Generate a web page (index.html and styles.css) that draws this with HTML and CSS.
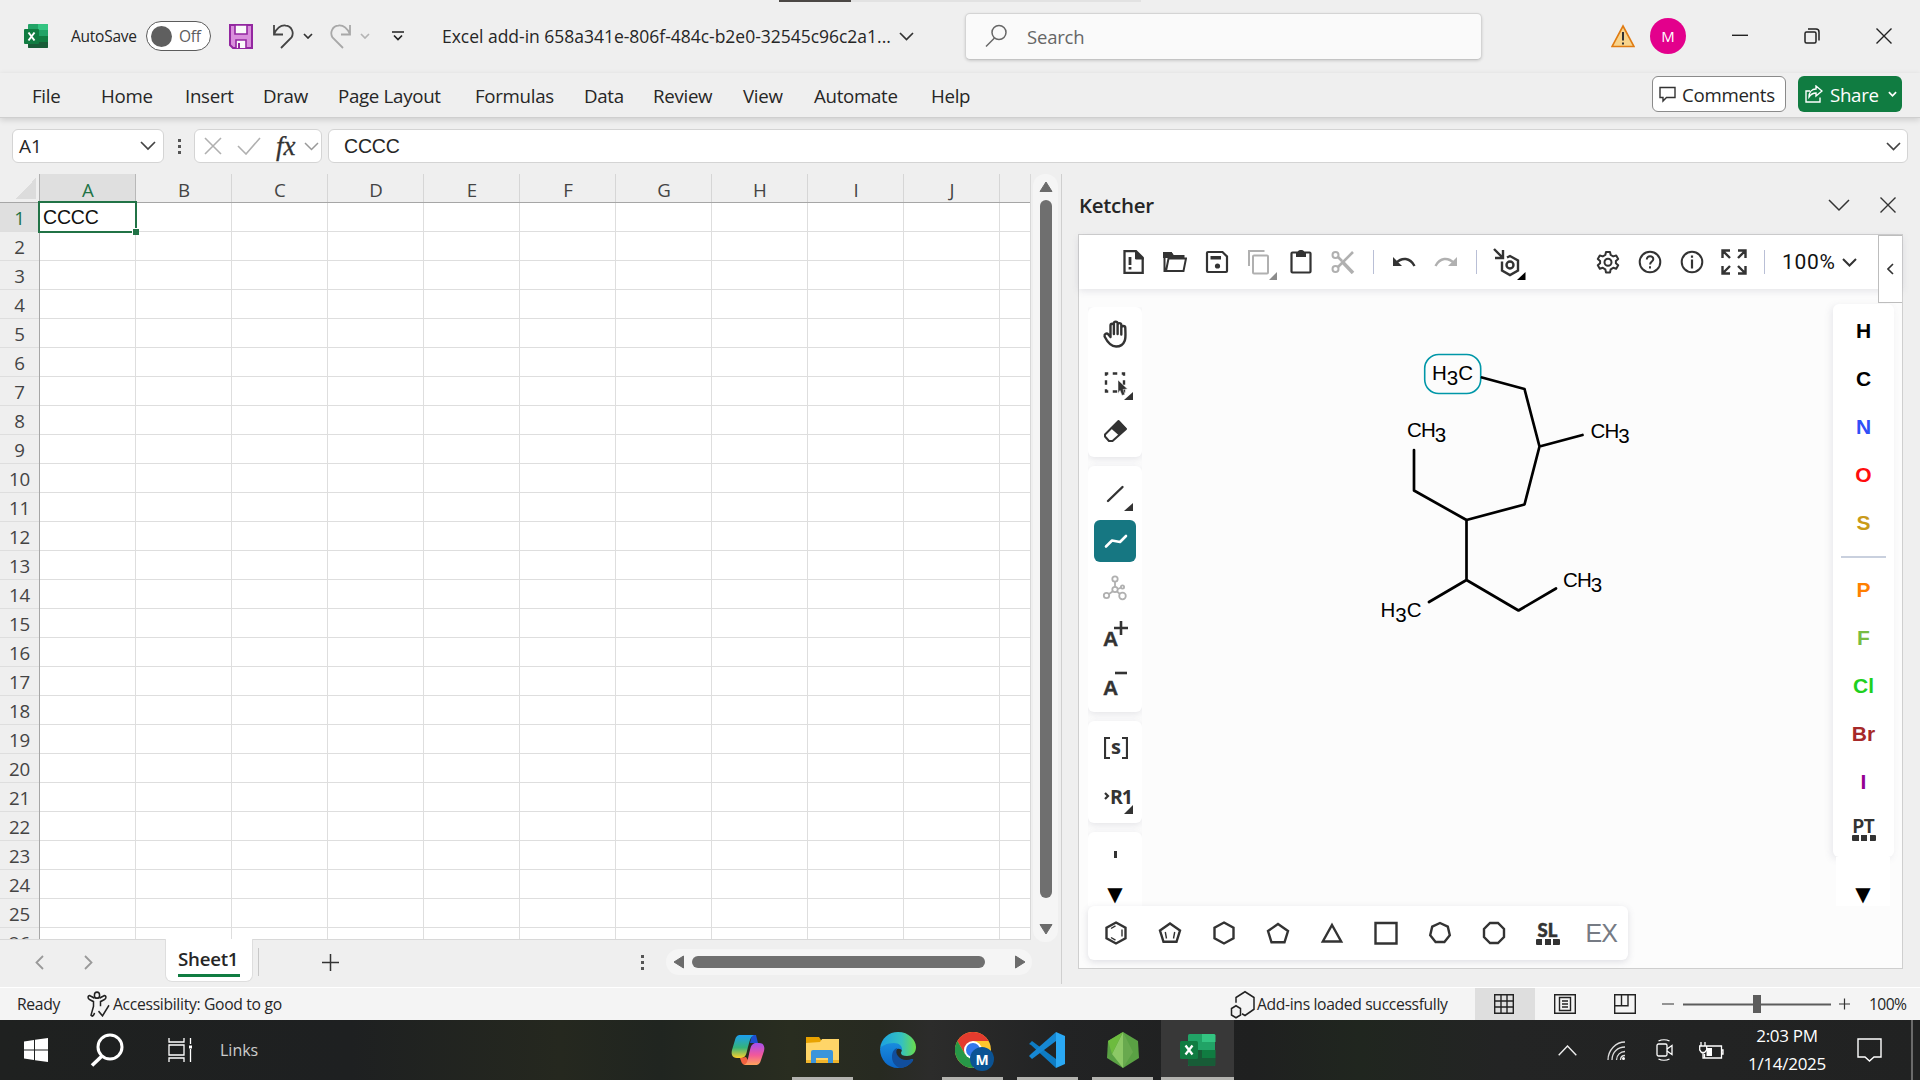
FILE: index.html
```html
<!DOCTYPE html>
<html lang="en">
<head>
<meta charset="utf-8">
<title>Excel - Ketcher add-in</title>
<link rel="stylesheet" href="styles.css">
</head>
<body>
<div class="app">

<header class="titlebar">
  <div class="progress"><i></i></div>
  <svg class="excel-logo" width="24" height="24" viewBox="0 0 24 24"><rect x="4" width="20" height="24" rx="1" fill="#21a366"/><path d="M14 0h9a1 1 0 0 1 1 1v5H14z" fill="#33c481"/><path d="M14 6h10v6H14z" fill="#21a366"/><path d="M4 12h10v6H4z" fill="#185c37"/><path d="M14 12h10v6H14z" fill="#107c41"/><path d="M4 18h20v5a1 1 0 0 1-1 1H5a1 1 0 0 1-1-1z" fill="#185c37"/><rect y="5" width="15" height="15" rx="1" fill="#107c41"/><path d="M4.500 8.500l6 8M10.500 8.500l-6 8" stroke="#fff" stroke-width="2"/></svg>
  <span class="autosave">AutoSave</span>
  <span class="toggle"><i></i>Off</span>
  <svg class="save" width="24" height="25" viewBox="0 0 24 25"><path d="M1 1h22v23H4l-3-3z" fill="#d98fdc" stroke="#9327a0" stroke-width="2"/><path d="M6 1h12v9H6zM7 24v-8h10v8" fill="#fafafa" stroke="#9327a0" stroke-width="1.600"/><path d="M10 19v5" stroke="#9327a0" stroke-width="2"/></svg>
  <svg class="undo" width="23" height="25" viewBox="0 0 23 25" fill="none" stroke="#444" stroke-width="1.800"><path d="M2 1v9.500h9M2 10C5 4 9 1 13.500 1.500c6 .5 9 7 6 12L9 24"/></svg>
  <svg class="chev-a" width="10" height="6" viewBox="0 0 10 6" fill="none" stroke="#333" stroke-width="1.700"><path d="M1 1l4 4 4-4"/></svg>
  <svg class="redo" width="23" height="25" viewBox="0 0 23 25" fill="none" stroke="#a8a8a8" stroke-width="1.800"><path d="M21 1v9.500h-9M21 10C18 4 14 1 9.500 1.500c-6 .5-9 7-6 12L14 24"/></svg>
  <svg class="chev-b" width="10" height="6" viewBox="0 0 10 6" fill="none" stroke="#b4b4b4" stroke-width="1.700"><path d="M1 1l4 4 4-4"/></svg>
  <svg class="qat" width="12" height="10" viewBox="0 0 12 10" fill="none" stroke="#222" stroke-width="1.700"><path d="M0 1h12M2 4.500l4 4 4-4"/></svg>
  <span class="doc-name">Excel add-in 658a341e-806f-484c-b2e0-32545c96c2a1...</span>
  <svg class="chev-c" width="15" height="9" viewBox="0 0 15 9" fill="none" stroke="#333" stroke-width="1.700"><path d="M1 1l6.500 6.500L14 1"/></svg>
  <div class="search"><svg width="22" height="24" viewBox="0 0 22 24" fill="none" stroke="#666" stroke-width="1.500"><circle cx="14" cy="8.500" r="7"/><path d="M9.500 14L1 22.500"/></svg><span>Search</span></div>
  <svg class="warn" width="24" height="24" viewBox="0 0 24 24"><path d="M12 2L23 22.500H1z" fill="#f8d48c" stroke="#e07b12" stroke-width="1.600"/><path d="M12 8v8.500M12 18.500v2" stroke="#333" stroke-width="2"/></svg>
  <span class="avatar">M</span>
  <svg class="w-min" width="16" height="16" viewBox="0 0 16 16" stroke="#222" stroke-width="1.400"><path d="M0 7.300h16"/></svg>
  <svg class="w-max" width="16" height="16" viewBox="0 0 16 16" fill="none" stroke="#222" stroke-width="1.500"><rect x="1" y="4" width="11" height="11" rx="1.500"/><path d="M4 1h8a3 3 0 0 1 3 3v8.500"/></svg>
  <svg class="w-close" width="16" height="16" viewBox="0 0 16 16" stroke="#222" stroke-width="1.400"><path d="M.5.5l15 15M15.500.5l-15 15"/></svg>
</header>

<nav class="ribbon">
  <div class="tabs"><span>File</span><span>Home</span><span>Insert</span><span>Draw</span><span>Page Layout</span><span>Formulas</span><span>Data</span><span>Review</span><span>View</span><span>Automate</span><span>Help</span></div>
  <div class="btn comments"><svg width="17" height="17" viewBox="0 0 17 17" fill="none" stroke="#333" stroke-width="1.400"><path d="M1 1.500h15v10H7.500L4 15v-3.500H1z"/></svg><span>Comments</span></div>
  <div class="btn share"><svg width="18" height="18" viewBox="0 0 18 18" fill="none" stroke="#fff" stroke-width="1.400"><path d="M5 6H1v11h14v-4.500M11 1l6 5-6 5V8C8 8 6 9 4 12c0-5 3-8 7-8z"/></svg><span>Share</span><svg width="9" height="6" viewBox="0 0 10 6" fill="none" stroke="#fff" stroke-width="1.900"><path d="M1 1l4 4 4-4"/></svg></div>
</nav>

<section class="formula-bar">
  <div class="field name-box"><span>A1</span><svg width="16" height="10" viewBox="0 0 16 10" fill="none" stroke="#444" stroke-width="1.700"><path d="M1 1l7 7 7-7"/></svg></div>
  <div class="dots"><i></i><i></i><i></i></div>
  <div class="field fx">
    <svg width="18" height="18" viewBox="0 0 18 18" stroke="#b0b0b0" stroke-width="1.600"><path d="M1 1l16 16M17 1L1 17"/></svg>
    <svg width="24" height="18" viewBox="0 0 24 18" fill="none" stroke="#b0b0b0" stroke-width="1.600"><path d="M1 9l8 8L23 1"/></svg>
    <em>fx</em>
    <svg width="15" height="9" viewBox="0 0 15 9" fill="none" stroke="#999" stroke-width="1.500"><path d="M1 1l6.500 6.500L14 1"/></svg>
  </div>
  <div class="field formula"><span>CCCC</span><svg width="15" height="9" viewBox="0 0 15 9" fill="none" stroke="#444" stroke-width="1.700"><path d="M1 1l6.500 6.500L14 1"/></svg></div>
</section>

<main class="main">
  <section class="workbook">
    <div class="grid-area">
      <div class="sheet">
        <div class="col-heads"><span class="corner"></span><span class="on">A</span><span>B</span><span>C</span><span>D</span><span>E</span><span>F</span><span>G</span><span>H</span><span>I</span><span>J</span><span class="rest"></span></div>
        <div class="sheet-body">
          <div class="row-heads"><span class="on">1</span><span>2</span><span>3</span><span>4</span><span>5</span><span>6</span><span>7</span><span>8</span><span>9</span><span>10</span><span>11</span><span>12</span><span>13</span><span>14</span><span>15</span><span>16</span><span>17</span><span>18</span><span>19</span><span>20</span><span>21</span><span>22</span><span>23</span><span>24</span><span>25</span><span>26</span></div>
          <div class="cells"><div class="active-cell">CCCC<i></i></div></div>
        </div>
      </div>
      <div class="vscroll">
        <svg width="14" height="12" viewBox="0 0 14 12"><path d="M7 1l6 9.500H1z" fill="#6b6b6b" stroke="#6b6b6b" stroke-linejoin="round"/></svg>
        <i></i>
        <svg width="14" height="12" viewBox="0 0 14 12"><path d="M7 11l6-9.500H1z" fill="#6b6b6b" stroke="#6b6b6b" stroke-linejoin="round"/></svg>
      </div>
    </div>
    <div class="sheet-tabs">
      <svg class="prev" width="9" height="15" viewBox="0 0 9 15" fill="none" stroke="#999" stroke-width="1.800"><path d="M8 1L1.500 7.500 8 14"/></svg>
      <svg class="next" width="9" height="15" viewBox="0 0 9 15" fill="none" stroke="#999" stroke-width="1.800"><path d="M1 1l6.500 6.500L1 14"/></svg>
      <div class="tab"><span>Sheet1</span></div>
      <i class="tab-sep"></i>
      <svg class="add" width="17" height="17" viewBox="0 0 17 17" stroke="#333" stroke-width="1.500"><path d="M8.500 0v17M0 8.500h17"/></svg>
      <div class="dots tab-dots"><i></i><i></i><i></i></div>
      <div class="hscroll">
        <svg width="12" height="14" viewBox="0 0 12 14"><path d="M1 7l9.500-6v12z" fill="#6b6b6b" stroke="#6b6b6b" stroke-linejoin="round"/></svg>
        <i></i>
        <svg width="12" height="14" viewBox="0 0 12 14"><path d="M11 7L1.500 1v12z" fill="#6b6b6b" stroke="#6b6b6b" stroke-linejoin="round"/></svg>
      </div>
    </div>
  </section>

  <aside class="pane">
    <div class="pane-head"><h2>Ketcher</h2>
      <svg width="22" height="13" viewBox="0 0 22 13" fill="none" stroke="#333" stroke-width="1.500"><path d="M1 1l10 10L21 1"/></svg>
      <svg width="16" height="16" viewBox="0 0 16 16" stroke="#333" stroke-width="1.400"><path d="M.5.5l15 15M15.500.5l-15 15"/></svg>
    </div>
    <div class="ketcher">
      <div class="k-toolbar">
        <svg class="ic" viewBox="0 0 24 24"><path d="M3.500 1.200H15l6.700 6.500V23H3.500z" fill="none" stroke="#333" stroke-width="2.300"/><path d="M14.500 1v8h8z" fill="#333" stroke="#333"/><path d="M9 7v8M9 17v2.600" stroke="#333" stroke-width="2.800"/></svg>
        <svg class="ic" viewBox="0 0 24 24" fill="none" stroke="#333" stroke-width="2"><path d="M4 21H1.500V3H8l2 3h10.500v3M5.500 8.500H23L20.500 21H3z"/><path d="M1 3h7l2 3h10v1H1z" fill="#333"/></svg>
        <svg class="ic" viewBox="0 0 24 24"><path d="M3 2h14.500L22 6.500V21a1 1 0 0 1-1 1H3a1 1 0 0 1-1-1V3a1 1 0 0 1 1-1z" fill="none" stroke="#333" stroke-width="2.200"/><path d="M5.500 6H16v3.500H5.500z" fill="#333"/><circle cx="12.500" cy="16" r="2.600" fill="#333"/></svg>
        <svg class="ic wide" viewBox="0 0 34 30" fill="none" stroke="#b0b0b0" stroke-width="2"><path d="M6 16V1h15.500"/><rect x="10" y="5.500" width="15" height="18" rx="1"/><path d="M34 22v8h-8z" fill="#8b8b8b" stroke="none"/></svg>
        <svg class="ic" viewBox="0 0 24 24" fill="none" stroke="#333" stroke-width="2.200"><rect x="2.500" y="2.500" width="19" height="20" rx="1"/><path d="M7 3V7h10V3h-2.500a2.500 2.500 0 0 0-5 0z" fill="#333" stroke="none"/><path d="M9.500 3a2.500 2 0 0 1 5 0"/></svg>
        <svg class="ic" viewBox="0 0 24 24" fill="none" stroke="#b0b0b0" stroke-width="2"><circle cx="4.500" cy="5" r="3"/><circle cx="4.500" cy="19" r="3"/><path d="M7 7l4 4M7 17L22 2" stroke-width="2.600"/><path d="M12 12.500L22 23" stroke-width="3.500"/></svg>
        <i class="sep"></i>
        <svg class="ic" viewBox="0 0 24 24"><path d="M1 7v9h9z" fill="#333"/><path d="M4 13C10 7 18 7.500 22.500 16" fill="none" stroke="#333" stroke-width="2.400"/></svg>
        <svg class="ic" viewBox="0 0 24 24"><path d="M23 7v9h-9z" fill="#b0b0b0"/><path d="M20 13C14 7 6 7.500 1.500 16" fill="none" stroke="#b0b0b0" stroke-width="2.400"/></svg>
        <i class="sep"></i>
        <svg class="ic calc" viewBox="0 0 34 32" fill="none" stroke="#333" stroke-width="2.400"><path d="M1 1l8.500 8.500M10 2v8H2"/><path d="M9 13.500v9l8 4.500 8-4.500v-10L17 8l-3 1.500"/><circle cx="17" cy="17" r="3.500"/><path d="M32.500 24v8H24z" fill="#000" stroke="none"/></svg>
        <svg class="ic push" viewBox="0 0 24 24" fill="none" stroke="#333" stroke-width="2" stroke-linejoin="round"><path d="M10 2h4l.7 3 2.500 1.400 3-.9 2 3.500-2.300 2v2.300l2.300 2-2 3.500-3-1-2.500 1.500L14 22.500h-4l-.7-3.200-2.500-1.500-3 1-2-3.500 2.300-2V11L1.800 9l2-3.500 3 .9L9.300 5z"/><circle cx="12" cy="12.200" r="3.500"/></svg>
        <svg class="ic" viewBox="0 0 24 24" fill="none" stroke="#333" stroke-width="2"><circle cx="12" cy="12" r="10.300"/><path d="M8.800 9.500c0-4.500 6.700-4.200 6.500-.2-.1 2.200-3.200 2.500-3.200 5.200M12 16.300v2.200"/></svg>
        <svg class="ic" viewBox="0 0 24 24" fill="none" stroke="#333" stroke-width="2"><circle cx="12" cy="12" r="10.300"/><path d="M12 9.500v9M12 5.500v2.300" stroke-width="2.200"/></svg>
        <svg class="ic full" viewBox="0 0 26 26" fill="none" stroke="#333" stroke-width="2.400"><path d="M1.500 9V1.500H9M2 2l7 7M17 1.500h7.500V9M24 2l-7 7M1.500 17v7.500H9M2 24l7-7M24.500 17v7.500H17M24 24l-7-7"/></svg>
        <i class="sep"></i>
        <span class="zoom">100%</span>
        <svg class="zoom-chev" width="15" height="9" viewBox="0 0 15 9" fill="none" stroke="#333" stroke-width="2"><path d="M1 1l6.500 6.500L14 1"/></svg>
        <div class="panel-toggle"><svg width="7" height="12" viewBox="0 0 7 12" fill="none" stroke="#333" stroke-width="1.600"><path d="M6 1L1 6l5 5"/></svg></div>
      </div>

      <div class="k-body">
        <div class="k-work">
          <div class="k-left">
            <div class="group g1">
              <svg class="tool" viewBox="0 0 42 42" fill="none" stroke="#333" stroke-width="2.400" stroke-linecap="round" stroke-linejoin="round"><path d="M16.500 24V12.500a1.700 1.700 0 0 1 3.400 0V21v-10.500a1.800 1.800 0 0 1 3.700 0V21v-9a1.800 1.800 0 0 1 3.700 0v9.500-6.500a1.900 1.900 0 0 1 4 0c0 4 .8 9.500-.7 13-1.500 4-4.500 5.500-8.500 5.500-6 0-9.500-6-11.500-10-.5-2.500 2-4 3.800-2z"/></svg>
              <svg class="tool" viewBox="0 0 42 42"><path d="M12 11.500h18v18H12z" fill="none" stroke="#333" stroke-width="2.400" stroke-dasharray="4.500 4.500" stroke-dashoffset="2.250"/><path d="M24 18l9.500 9-4.500.5 2 5-3 1-2-5-2 3z" fill="#333" stroke="#fff" stroke-width=".5"/><path d="M39 30v8h-9z" fill="#333"/></svg>
              <svg class="tool" viewBox="0 0 42 42"><path d="M24.500 10l7.500 8-13.500 12h-3.500L11 25.500v-2z" fill="none" stroke="#333" stroke-width="2" stroke-linejoin="round"/><path d="M24.500 9.500l8 8-7.500 7-8.500-7.500z" fill="#333"/></svg>
            </div>
            <div class="group g2">
              <svg class="tool" viewBox="0 0 42 42"><path d="M14 28L28.500 14" stroke="#333" stroke-width="2.400" stroke-linecap="round"/><path d="M39 30v8h-9z" fill="#333"/></svg>
              <svg class="tool active" viewBox="0 0 42 42"><path d="M12 26.500l6-6 8 1.500 6-6" fill="none" stroke="#fff" stroke-width="2.600" stroke-linecap="round" stroke-linejoin="round"/></svg>
              <svg class="tool" viewBox="0 0 42 42" fill="none" stroke="#b0b0b0" stroke-width="1.800"><circle cx="21" cy="11" r="2.700"/><circle cx="21" cy="21.500" r="2.700"/><circle cx="12.500" cy="27.500" r="2.700"/><circle cx="28.500" cy="28" r="3.300"/><circle cx="28.500" cy="19" r="1.600"/><path d="M21 14v5M18.500 23.500l-3.500 2.500M23 23.500l3 2.500M24 21l3-1.500"/></svg>
              <div class="tool letter">A<svg width="14" height="14" viewBox="0 0 14 14" stroke="#333" stroke-width="2.600"><path d="M7 0v14M0 7h14"/></svg></div>
              <div class="tool letter">A<svg width="12" height="14" viewBox="0 0 12 14" stroke="#333" stroke-width="2.600"><path d="M0 3h12"/></svg></div>
            </div>
            <div class="group g3">
              <div class="tool sgroup"><svg width="6" height="22" viewBox="0 0 6 22" fill="none" stroke="#333" stroke-width="2.200"><path d="M6 1H1v20h5"/></svg><b>s</b><svg width="6" height="22" viewBox="0 0 6 22" fill="none" stroke="#333" stroke-width="2.200"><path d="M0 1h5v20H0"/></svg></div>
              <div class="tool rgroup"><svg width="6" height="8" viewBox="0 0 6 8" fill="none" stroke="#333" stroke-width="2.200"><path d="M1 1l3 3-3 3"/></svg><b>R1</b><svg class="mark" width="9" height="9" viewBox="0 0 9 9"><path d="M9 0v9H0z" fill="#333"/></svg></div>
            </div>
            <div class="group g4"><i></i></div>
            <div class="more">▼</div>
          </div>
          <svg class="canvas" viewBox="1142 307 691 599" fill="none" stroke="#000" stroke-width="2.700" stroke-linecap="round" stroke-linejoin="round">
            <rect x="1424.700" y="354.500" width="56" height="39" rx="14" stroke="#0097a8" stroke-width="1.600"/>
            <path d="M1482 377.500l42.500 11.500 15 57.500-15 58-58 15.500-52.500-29.500v-40.500M1539.500 446.500l43-11.500M1466.500 520v60l-37.500 22M1466.500 580l52 30.500 37.500-22"/>
            <g class="atom">
              <text class="hc" x="1432" y="380">H<tspan dy="4.500">3</tspan><tspan dy="-4.500">C</tspan></text>
              <text x="1407" y="437">CH<tspan dy="4.500">3</tspan></text>
              <text x="1590.500" y="438">CH<tspan dy="4.500">3</tspan></text>
              <text x="1563" y="587">CH<tspan dy="4.500">3</tspan></text>
              <text class="hc" x="1380.500" y="617">H<tspan dy="4.500">3</tspan><tspan dy="-4.500">C</tspan></text>
            </g>
          </svg>
          <div class="k-right">
            <div class="elements">
              <b class="e-h">H</b><b class="e-c">C</b><b class="e-n">N</b><b class="e-o">O</b><b class="e-s">S</b>
              <hr>
              <b class="e-p">P</b><b class="e-f">F</b><b class="e-cl">Cl</b><b class="e-br">Br</b><b class="e-i">I</b>
              <div class="stack pt"><span>PT</span><i></i></div>
            </div>
            <div class="more-r">▼</div>
          </div>
        </div>
        <div class="k-bottom">
          <svg viewBox="0 0 24 24"><path d="M12 1.500l9.500 5.300v10.400L12 22.500l-9.500-5.300V6.800z"/><path d="M18 8.500v7M7 7.500l4.500-2.700M7 16.500l4.500 2.700" stroke-width="1.400"/></svg>
          <svg viewBox="0 0 24 24"><path d="M12 2.500L22 9.500l-3.500 11.300h-13L2 9.500z"/><path d="M8.500 17.500L7.300 11M15.500 17.500l1.200-6.500" stroke-width="1.400"/></svg>
          <svg viewBox="0 0 24 24"><path d="M12 1.500l9.500 5.300v10.400L12 22.500l-9.500-5.300V6.800z"/></svg>
          <svg viewBox="0 0 24 24"><path d="M12 3L22 10l-3.500 11.300h-13L2 10z"/></svg>
          <svg viewBox="0 0 24 24"><path d="M12 4l9.200 16.500H2.800z"/></svg>
          <svg viewBox="0 0 24 24"><path d="M1.500 2h21v20.500h-21z"/></svg>
          <svg viewBox="0 0 24 24"><path d="M12 2l7.800 3.700 2 8.500-5.400 6.800H7.600l-5.400-6.800 2-8.500z"/></svg>
          <svg viewBox="0 0 24 24"><path d="M8 2h8l6 6v8l-6 6H8l-6-6V8z"/></svg>
          <div class="stack sl"><span>SL</span><i></i></div>
          <span class="ex">EX</span>
        </div>
      </div>
    </div>
  </aside>
</main>

<footer class="statusbar">
  <span class="ready">Ready</span>
  <svg class="acc" width="23" height="26" viewBox="0 0 23 22" preserveAspectRatio="none" fill="none" stroke="#222" stroke-width="1.500"><circle cx="10" cy="3.500" r="2.600"/><path d="M7.500 6L3 4C.5 3.500.5 6.500 2.500 7.200L6.500 9v4L4 20.500c1.500 1.500 3 0 3.500-2M12.500 6L17 4c2.500-.5 2.500 2.500.5 3.200L13.500 9v4M11.500 17l4 4 6.500-9"/></svg>
  <span class="acc-text">Accessibility: Good to go</span>
  <svg class="addin" width="25" height="29" viewBox="0 0 25 25" preserveAspectRatio="none" fill="none" stroke="#222" stroke-width="1.500"><path d="M6 11V6.500L15 1.500l9 5v10L15 22l-3-1.500M6 13.500l4.500 2.500v5.500L6 24l-4.500-2.500V16z"/></svg>
  <span class="addin-text">Add-ins loaded successfully</span>
  <div class="view on"><svg width="20" height="20" viewBox="0 0 20 20" fill="none" stroke="#222" stroke-width="1.400"><path d="M.7.700h18.600v18.600H.7zM7 .7v18.600M13 .7v18.600M.7 7h18.600M.7 13h18.600"/></svg></div>
  <div class="view"><svg width="22" height="20" viewBox="0 0 22 20" fill="none" stroke="#222" stroke-width="1.400"><path d="M.7.700h20.600v18.600H.7zM5.500 3.500h11v13h-11zM8 7h6M8 10h6M8 13h6"/></svg></div>
  <div class="view"><svg width="22" height="20" viewBox="0 0 22 20" fill="none" stroke="#222" stroke-width="1.400"><path d="M.7.700h20.600v18.600H.7zM7.500.7v11h6.500v-11M.7 11.700H14"/></svg></div>
  <svg class="zoom-slider" width="188" height="20" viewBox="0 0 188 20"><path d="M0 10h12M177 10h11M182.500 4.500v11" stroke="#333" stroke-width="1.200"/><path d="M21 10.500h148" stroke="#5c5c5c" stroke-width="2"/><path d="M91 1h8v18h-8z" fill="#5c5c5c"/></svg>
  <span class="zoom-pct">100%</span>
</footer>

<footer class="taskbar">
  <svg class="t-win" width="24" height="24" viewBox="0 0 24 24" fill="#fff"><path d="M0 3.500L10 2v9.500H0zM11 1.800L24 0v11.500H11zM0 12.500h10V22L0 20.500zM11 12.500h13V24l-13-1.800z"/></svg>
  <svg class="t-search" width="34" height="34" viewBox="0 0 34 34" fill="none" stroke="#fff" stroke-width="3"><circle cx="20" cy="14" r="12"/><path d="M12 23L2 32.500" stroke-width="3.600"/></svg>
  <svg class="t-view" width="25" height="24" viewBox="0 0 25 24" fill="none" stroke="#fff" stroke-width="1.300"><path d="M1 0v4h15V0M1 7h15v10H1zM1 24v-4h15v4M22.500 0v6M22.500 11v13"/><path d="M21 7.500h3v3h-3z" fill="#fff" stroke="none"/></svg>
  <span class="links">Links</span>
  <div class="apps">
    <div class="app-btn"><svg width="34" height="32" viewBox="0 0 34 32"><defs><linearGradient id="ca" x2="0" y2="1"><stop stop-color="#1c9ef0"/><stop offset=".55" stop-color="#35b37a"/><stop offset="1" stop-color="#ffd02a"/></linearGradient><linearGradient id="cb" x2="0" y2="1"><stop stop-color="#a44fee"/><stop offset=".55" stop-color="#f2589a"/><stop offset="1" stop-color="#ffa45a"/></linearGradient></defs><path d="M21 1h4l2 8h-8z" fill="#1c4fd0"/><path d="M9 1h14c-4 1-5 9-7 16-1 5-3 7-6 7H6c-5 0-6-4-5-8L4 6c1-4 3-5 5-5z" fill="url(#ca)"/><path d="M9 24l6-1 5 8h-6c-3 0-4-4-5-7z" fill="#f2623f"/><path d="M25 31H13c4-1 4-8 6-15 1-5 3-7 6-7h3c5 0 6 4 5 8l-3 9c-1 4-3 5-5 5z" fill="url(#cb)"/></svg></div>
    <div class="app-btn run"><svg width="33" height="28" viewBox="0 0 33 28"><path d="M0 1h13l2 3v6H0z" fill="#e8a200"/><path d="M0 7l14-1 2-3h17v23H0z" fill="#ffd568"/><path d="M0 24h33v3H0z" fill="#f0b52c"/><path d="M5 27V16a2 2 0 0 1 2-2h18a2 2 0 0 1 2 2v11h-5v-5H10v5z" fill="#3b95dc"/></svg></div>
    <div class="app-btn"><svg width="36" height="36" viewBox="0 0 36 36"><defs><linearGradient id="ea"><stop stop-color="#1ba1e2"/><stop offset=".6" stop-color="#35c1c0"/><stop offset="1" stop-color="#6bdd4a"/></linearGradient><linearGradient id="eb" x2="0" y2="1"><stop stop-color="#1a8fe0"/><stop offset="1" stop-color="#0b66c8"/></linearGradient></defs><path d="M0 17C3 10 9 8 14 9c6 0 10 4 10 8 0 1-.5 2-1 3-1-3-4-4-6-3-3 3-1 9 3 11 4 2 9 1 12-1 1 0 1.500.5 1 1.500C30 33 25 36 18 36 8 36 0 28 0 17z" fill="url(#eb)"/><path d="M0 17C1 6 9 0 18 0c11 0 18 8 18 15 0 6-4 9-9 9-4 0-6-1-6-3 0-1 1-2 1-4 0-3-3-6-8-6C7 11 1 14 0 17z" fill="url(#ea)"/><path d="M12 25c0-5 2-8 5-9-1 3-1 6 1 8 3 4 8 5 14 3 1 0 1.500.5 1 1.500C30 33 25 36 20 36c-5-2-8-6-8-11z" fill="#114e9c"/></svg></div>
    <div class="app-btn run"><svg class="chrome" width="39" height="39" viewBox="0 0 39 39"><circle cx="18" cy="18" r="18" fill="#ffc72e"/><path d="M18 9h15.600A18 18 0 0 0 2.400 9L10 22z" fill="#e33b2e"/><path d="M2.400 9A18 18 0 0 0 18 36l8-14H10z" fill="#279847"/><circle cx="18" cy="18" r="9" fill="#fff"/><circle cx="18" cy="18" r="7" fill="#3378ea"/><circle cx="27" cy="27" r="12" fill="#0b5394"/></svg><b class="badge">M</b></div>
    <div class="app-btn run"><svg width="37" height="36" viewBox="0 0 37 36"><path d="M0 12l3-3 24 18v9L2 13z" fill="#0e7cc4"/><path d="M0 24l3 3L27 9V0L2 22z" fill="#1688d4"/><path d="M27 0l9 4v28l-9 4z" fill="#2aa8f4"/></svg></div>
    <div class="app-btn run"><svg width="32" height="36" viewBox="0 0 32 36"><path d="M16 0l15 9 1 17-16 10L0 26 1 9z" fill="#5aa144"/><path d="M16 0L5 22l11 14z" fill="#8cc866"/><path d="M16 0l10 20-10 16z" fill="#68a94e"/><path d="M1 9L16 0 5 22z" fill="#6dbb3e"/></svg></div>
    <div class="app-btn run sel"><svg width="36" height="32" viewBox="0 0 36 32"><rect x="8" width="27" height="32" rx="1.500" fill="#21a366"/><path d="M22 0h12a1.500 1.500 0 0 1 1.500 1.500V8H22z" fill="#33c481"/><path d="M22 16h13.500v8H22z" fill="#107c41"/><path d="M8 16h14v8H8zM8 24h27.500v6.500A1.500 1.500 0 0 1 34 32H9.500A1.500 1.500 0 0 1 8 30.500z" fill="#185c37"/><rect y="7" width="18" height="18" rx="1.500" fill="#107c41"/><path d="M5.500 11.500l7 9M12.500 11.500l-7 9" stroke="#fff" stroke-width="2.300"/></svg></div>
  </div>
  <svg class="s-up" width="19" height="11" viewBox="0 0 19 11" fill="none" stroke="#eee" stroke-width="1.400"><path d="M.7 10.300L9.500 1l8.800 9.300"/></svg>
  <svg class="s-wifi" width="19" height="19" viewBox="0 0 19 19" fill="none" stroke="#ddd" stroke-width="1.300"><path d="M1 19C1 9 9 1 18 1M5 19C5 11 11 6 18 6M9.500 19c0-5 4-8.500 8.500-8.500M13.500 19c0-3 2-4.500 4.500-4.500"/><circle cx="16.500" cy="17.500" r="1.500" fill="#fff" stroke="none"/></svg>
  <svg class="s-cam" width="17" height="22" viewBox="0 0 17 22" fill="none" stroke="#fff" stroke-width="1.300"><rect x="1" y="5" width="10" height="12" rx="1.500"/><path d="M11 10l5-3.500v9L11 12M2.500 2c3-1.500 8-1.500 11 0M2.500 20c3 1.500 8 1.500 11 0"/></svg>
  <svg class="s-bat" width="25" height="17" viewBox="0 0 25 17" fill="none" stroke="#fff" stroke-width="1.300"><path d="M8 4h14.500v12H5.500v-4M22.500 8H24v4h-1.500M2 0v4M6 0v4M.7 4h7v4L5.500 10.500h-3L.7 8zM4 10.500V16h2"/><path d="M7.500 6H13v8H7.500z" fill="#fff" stroke="none"/></svg>
  <div class="clock"><span>2:03 PM</span><span>1/14/2025</span></div>
  <svg class="s-note" width="25" height="24" viewBox="0 0 25 24" fill="none" stroke="#fff" stroke-width="1.400"><path d="M1 1h23v18h-7l-4.500 4L8 19H1z"/></svg>
  <i class="peek"></i>
</footer>
</div>
</body>
</html>
```
FILE: styles.css
```css
* { box-sizing: border-box; }
body { margin: 0; font-family: "Open Sans", "Noto Sans", sans-serif; color: #262626; }
svg { display: block; flex: none; }
span, b { white-space: nowrap; }
.app { width: 1920px; height: 1080px; overflow: hidden; background: #efefef; display: flex; flex-direction: column; }

/* title bar */
.titlebar { height: 73px; display: flex; align-items: center; position: relative; padding: 0 0 1px 24px; flex: none; }
.progress { position: absolute; left: 779px; top: 0; width: 362px; height: 2px; background: #e2e2e2; }
.progress i { display: block; width: 72px; height: 2px; background: #4b4845; }
.autosave { margin-left: 23px; width: 75px; font-size: 15.500px; letter-spacing: -.25px; }
.toggle { width: 65px; height: 30px; border: 1.500px solid #5c5c5c; border-radius: 15px; background: #fff; display: flex; align-items: center; font-size: 15.500px; color: #5c5c5c; padding-left: 4px; gap: 7px; letter-spacing: -.3px; }
.toggle i { width: 21px; height: 21px; border-radius: 50%; background: #5f5f5f; }
.save { margin-left: 18px; }
.undo { margin-left: 19px; }
.chev-a { margin-left: 8px; }
.redo { margin-left: 16px; }
.chev-b { margin-left: 8px; }
.qat { margin-left: 22px; }
.doc-name { margin-left: 38px; width: 457px; font-size: 17.500px; letter-spacing: -.02px; }
.search { margin-left: 51px; width: 517px; height: 47px; border: 1px solid #d4d4d4; border-bottom-color: #c4c4c4; border-radius: 5px; background: #fafafa; box-shadow: 0 1px 3px rgba(0,0,0,.15); display: flex; align-items: center; padding-left: 19px; gap: 20px; font-size: 18.500px; color: #666; letter-spacing: -.2px; }
.warn { margin-left: 129px; }
.avatar { margin-left: 15px; width: 36px; height: 36px; border-radius: 50%; background: #e3008c; color: #fff; font-size: 15px; display: flex; align-items: center; justify-content: center; }
.w-min { margin-left: 46px; }
.w-max { margin-left: 56px; }
.w-close { margin-left: 56px; }

/* ribbon */
.ribbon { height: 45px; display: flex; flex: none; border-bottom: 1px solid #cfcfcf; position: relative; box-shadow: 0 2px 6px rgba(0,0,0,.14); }
.tabs { display: grid; grid-template-columns: 69px 84px 78px 75px 137px 109px 69px 90px 71px 117px 60px; padding-left: 32px; width: 1652px; align-items: center; font-size: 18.700px; letter-spacing: -.3px; height: 44px; }
.btn { height: 36px; margin-top: 3px; border-radius: 6px; display: flex; align-items: center; font-size: 18.700px; }
.comments { width: 134px; border: 1px solid #8a8a8a; background: #fff; padding-left: 6px; gap: 6px; letter-spacing: -.3px; }
.share { margin-left: 12px; width: 104px; background: #107c41; color: #fff; padding-left: 7px; gap: 7px; letter-spacing: -.3px; }
.share span { margin-right: 2px; }

/* formula bar */
.formula-bar { height: 56px; display: flex; padding: 11px 12px 0; flex: none; font-size: 19px; }
.field { height: 34px; border: 1px solid #d4d4d4; border-radius: 6px; background: #fff; display: flex; align-items: center; }
.name-box { width: 152px; justify-content: space-between; padding: 0 7px 0 6px; letter-spacing: 0; }
.dots { display: flex; flex-direction: column; gap: 3px; width: 30px; align-items: center; justify-content: center; }
.dots i { width: 3px; height: 3px; background: #555; }
.formula-bar .dots { height: 34px; }
.fx { width: 128px; padding-left: 9px; }
.fx svg + svg { margin-left: 15px; }
.fx em { margin-left: 15px; width: 22px; font: italic 27px/30px "Liberation Serif", serif; color: #333; -webkit-text-stroke: .3px #333; }
.fx em + svg { margin-left: 6px; }
.formula { margin-left: 6px; width: 1580px; justify-content: space-between; padding: 0 6px 0 15px; font: 19.500px "Liberation Sans", Arial, sans-serif; letter-spacing: -.2px; }

/* worksheet */
.main { height: 813px; display: flex; flex: none; }
.workbook { width: 1061px; display: flex; flex-direction: column; }
.grid-area { height: 765px; display: flex; }
.sheet { width: 1031px; height: 766px; overflow: hidden; position: relative; border-right: 1px solid #d8d8d8; border-bottom: 1px solid #d8d8d8; }
.col-heads { height: 29px; display: flex; border-bottom: 1px solid #a6a6a6; font-size: 18.700px; color: #444; }
.col-heads span { width: 96px; border-right: 1px solid #d6d6d6; display: flex; align-items: center; justify-content: center; padding: 2px 0 0 1px; }
.col-heads .corner { width: 40px; border-color: #b0b0b0; background: linear-gradient(135deg, transparent 50%, #dcdcdc 50%) 15px 4px / 21px 21px no-repeat; }
.col-heads .on { background: #dfdfdf; color: #217346; border-color: #b8b8b8; }
.col-heads .rest { border: 0; width: 30px; }
.sheet-body { display: flex; height: 736px; }
.row-heads { width: 40px; flex: none; border-right: 1px solid #a6a6a6; font-size: 18.700px; color: #444; letter-spacing: -.2px; }
.row-heads span { height: 29px; display: flex; align-items: center; justify-content: center; border-bottom: 1px solid #dedede; }
.row-heads .on { background: #dfdfdf; color: #217346; }
.cells { flex: 1; position: relative; background: repeating-linear-gradient(to right, transparent 0 95px, #dedede 95px 96px), repeating-linear-gradient(to bottom, #fff 0 28px, #dedede 28px 29px); }
.active-cell { position: absolute; left: -2px; top: -2px; width: 99px; height: 32px; border: 2px solid #217346; background: #fff; font: 19.500px/28px "Liberation Sans", Arial, sans-serif; color: #111; padding-left: 3px; letter-spacing: -.2px; }
.active-cell i { position: absolute; right: -4px; bottom: -4px; width: 7px; height: 7px; background: #217346; border: 1px solid #fff; border-width: 1px 0 0 1px; }
.vscroll { margin-left: 2px; width: 25px; height: 768px; border-radius: 12px; background: #f5f5f5; display: flex; flex-direction: column; align-items: center; padding: 7px 0; position: relative; }
.vscroll i { width: 12px; height: 698px; margin: 7px 0 25px; border-radius: 6px; background: #6f6f6f; }
.sheet-tabs { height: 48px; display: flex; align-items: center; padding: 0 0 2px 35px; position: relative; }
.next { margin-left: 40px; }
.tab { margin-left: 72px; width: 88px; height: 43px; align-self: flex-start; background: #fff; border: 1px solid #dedede; border-top: 0; border-radius: 0 0 7px 7px; display: flex; justify-content: center; padding-top: 6px; font-weight: 600; font-size: 18.700px; letter-spacing: -.25px; }
.tab span { height: 32px; border-bottom: 3px solid #107c41; line-height: 27px; width: 62px; }
.tab-sep { margin-left: 5px; width: 1px; height: 28px; background: #c8c8c8; }
.add { margin-left: 63px; }
.tab-dots { margin-left: 288px; }
.hscroll { margin-left: 9px; width: 366px; height: 26px; border-radius: 13px; background: #f5f5f5; display: flex; align-items: center; padding-left: 7px; }
.hscroll i { width: 293px; height: 12px; border-radius: 6px; background: #6f6f6f; margin: 0 29px 0 7px; }

/* task pane */
.pane { width: 859px; padding: 0 17px; border-left: 1px solid #cfcfcf; height: 810px; }
.pane-head { height: 60px; display: flex; align-items: center; padding: 2px 7px 0 0; }
.pane-head h2 { margin: 0; flex: 1; font-size: 20.500px; font-weight: 600; letter-spacing: -.3px; }
.pane-head svg + svg { margin-left: 30px; }
.ketcher { width: 825px; height: 735px; margin-left: -1px; border: 1px solid #cfcfcf; background: #fcfcfc; }
.k-toolbar { height: 54px; background: #fff; box-shadow: 0 2px 7px rgba(103,104,132,.16); display: flex; align-items: center; padding-left: 42px; position: relative; font-family: Inter, sans-serif; }
.ic { width: 24px; height: 24px; margin-right: 18px; }
.ic.wide { width: 34px; height: 30px; margin: 6px 12px 0 -4px; }
.sep { width: 1px; height: 24px; background: #b9bfd6; margin: 0 18px 0 0; }
.ic.calc { width: 34px; height: 32px; margin: 3px 2px 0 -2px; }
.ic.push { margin-left: 67px; }
.ic.full { width: 26px; height: 26px; margin: 0 17px 0 -1px; }
.zoom { font: 21px Roboto, sans-serif; color: #111; letter-spacing: .7px; width: 57px; margin-left: -1px; }
.zoom-chev { margin-left: 3px; }
.panel-toggle { position: absolute; right: 0; top: 0; width: 24px; height: 68px; border: 1px solid #bdbdbd; border-right: 0; background: #fff; display: flex; align-items: center; justify-content: center; }
.k-body { padding: 18px 8px 0 9px; }
.k-work { height: 599px; display: flex; }
.k-left { width: 54px; overflow: hidden; position: relative; }
.group { background: #fff; border-radius: 6px; box-shadow: 0 2px 7px rgba(103,104,132,.16); display: flex; flex-direction: column; align-items: center; margin-bottom: 9px; }
.tool { width: 42px; height: 42px; }
.g1 { height: 150px; padding-top: 6px; gap: 7px; }
.g2 { height: 246px; padding-top: 7px; gap: 6px; }
.active { background: #167782; border-radius: 6px; margin-top: -1px; }
.letter { display: flex; font: bold 21px/22px "Liberation Sans", sans-serif; color: #333; padding: 12px 0 0 9px; -webkit-text-stroke: .4px #333; }
.letter svg { margin: -7px 0 0 -4px; }
.letter + .letter svg { margin-left: -3px; }
.g2 .letter + .letter { margin-top: 1px; }
.g3 { height: 102px; padding-top: 6px; gap: 6px; }
.sgroup { display: flex; align-items: center; justify-content: center; font: 20px "Open Sans", sans-serif; gap: 1px; color: #333; padding-left: 2px; }
.sgroup b { height: 30px; line-height: 27px; width: 10px; text-align: center; }
.rgroup { display: flex; align-items: center; position: relative; padding-left: 10px; color: #333; font: 19.500px "Open Sans", sans-serif; letter-spacing: -1.200px; }
.rgroup .mark { position: absolute; right: 3px; bottom: 3px; }
.g4 { height: 26px; margin: 0; border-radius: 6px 6px 0 0; align-items: center; justify-content: flex-end; }
.g4 i { width: 3px; height: 7px; background: #333; }
.more, .more-r { background: #fff; height: 48px; color: #000; text-align: center; font: 20px/24px "DejaVu Sans", sans-serif; padding-top: 24px; }
.canvas { width: 691px; height: 599px; }
.atom text { font: 20.500px "Liberation Sans", Arial, sans-serif; fill: #000; stroke: none; letter-spacing: -.9px; }
.atom .hc { letter-spacing: 0; }
.k-right { width: 61px; margin-top: -3px; }
.elements { height: 553px; background: #fff; border-radius: 6px; box-shadow: -2px 2px 7px rgba(103,104,132,.13); padding-top: 3px; display: flex; flex-direction: column; align-items: center; }
.elements b { height: 48px; line-height: 47px; font-family: "Liberation Sans", Arial, sans-serif; font-size: 21px; flex: none; }
.elements hr { width: 45px; height: 2px; border: 0; background: #c9d0de; margin: 9px 0 8px; flex: none; }
.e-h, .e-c { color: #000; }
.e-n { color: #304ff7; }
.e-o { color: #ff0d0d; }
.e-s { color: #c99a19; }
.e-p { color: #ff8000; }
.e-f { color: #78bc42; }
.e-cl { color: #1fd01f; }
.e-br { color: #a62929; }
.e-i { color: #940094; }
.more-r { width: 54px; margin-left: 3px; height: 49px; padding-top: 25px; }
.stack { display: flex; flex-direction: column; align-items: center; width: 24px; }
.stack span { font: 900 18px/16px Lato, "Open Sans", sans-serif; color: #333; height: 17px; }
.stack i { width: 24px; height: 6px; border-radius: 1px; background: linear-gradient(to right, #333 0 6.500px, #fff 6.500px 8.700px, #333 8.700px 15.300px, #fff 15.300px 17.500px, #333 17.500px 24px); }
.pt { margin-top: 12px; }
.sl span { -webkit-text-stroke: .5px #333; font-size: 18.500px; }
.k-bottom { width: 540px; height: 54px; background: #fff; border-radius: 6px; box-shadow: 0 2px 7px rgba(103,104,132,.2); position: relative; display: flex; align-items: center; padding-left: 15.500px; gap: 30px; }
.k-bottom svg { width: 24px; height: 24px; fill: none; stroke: #333; stroke-width: 2.400; }
.ex { font: 25px "Liberation Sans", Arial, sans-serif; color: #767b84; letter-spacing: -.8px; margin-left: -4px; }

/* status bar */
.statusbar { height: 33px; flex: none; background: #f4f4f4; border-top: 1px solid #fff; display: flex; align-items: center; font-size: 15.700px; }
.ready { margin-left: 17px; width: 70px; letter-spacing: -.35px; }
.acc-text { margin-left: 3px; width: 1117px; letter-spacing: -.32px; }
.addin-text { margin-left: 2px; width: 218px; letter-spacing: -.35px; }
.view { width: 60px; height: 33px; display: flex; align-items: center; justify-content: center; }
.view.on { background: #dedede; }
.view.on svg { margin-right: 2px; }
.zoom-slider { margin-left: 7px; }
.zoom-pct { margin-left: 19px; letter-spacing: -.6px; }

/* taskbar */
.taskbar { height: 60px; flex: none; display: flex; align-items: center; color: #fff; background: linear-gradient(to right, #1f2120 0, #1e2021 350px, #25281f 560px, #202520 660px, #292d20 790px, #272a21 880px, #2c2c2b 930px, #222324 1060px, #1f2020 1250px, #20261f 1360px, #232424 1500px, #212222 1920px); }
.t-win { margin-left: 24px; }
.t-search { margin-left: 42px; }
.t-view { margin-left: 44px; }
.links { margin-left: 27px; width: 47px; font-size: 16px; color: #ccc; }
.apps { margin-left: 450px; display: flex; }
.app-btn { width: 61px; height: 60px; margin-right: 14px; display: flex; align-items: center; justify-content: center; position: relative; }
.app-btn.run { border-bottom: 3px solid #b3b3af; padding-top: 3px; }
.app-btn.sel { width: 73px; margin: 0 0 0 -6px; background: #383838; }
.chrome { margin: 3px 0 0 3px; }
.badge { position: absolute; left: 32px; top: 31px; font-size: 14px; line-height: 17px; width: 16px; text-align: center; }
.s-up { margin-left: 324px; }
.s-wifi { margin-left: 30px; }
.s-cam { margin-left: 30px; }
.s-bat { margin-left: 26px; }
.clock { margin-left: 13px; width: 100px; display: flex; flex-direction: column; align-items: center; font-size: 17px; line-height: 28px; letter-spacing: -.3px; }
.s-note { margin-left: 20px; }
.peek { margin-left: 29px; width: 2px; height: 60px; background: #6a6a6a; }
```
